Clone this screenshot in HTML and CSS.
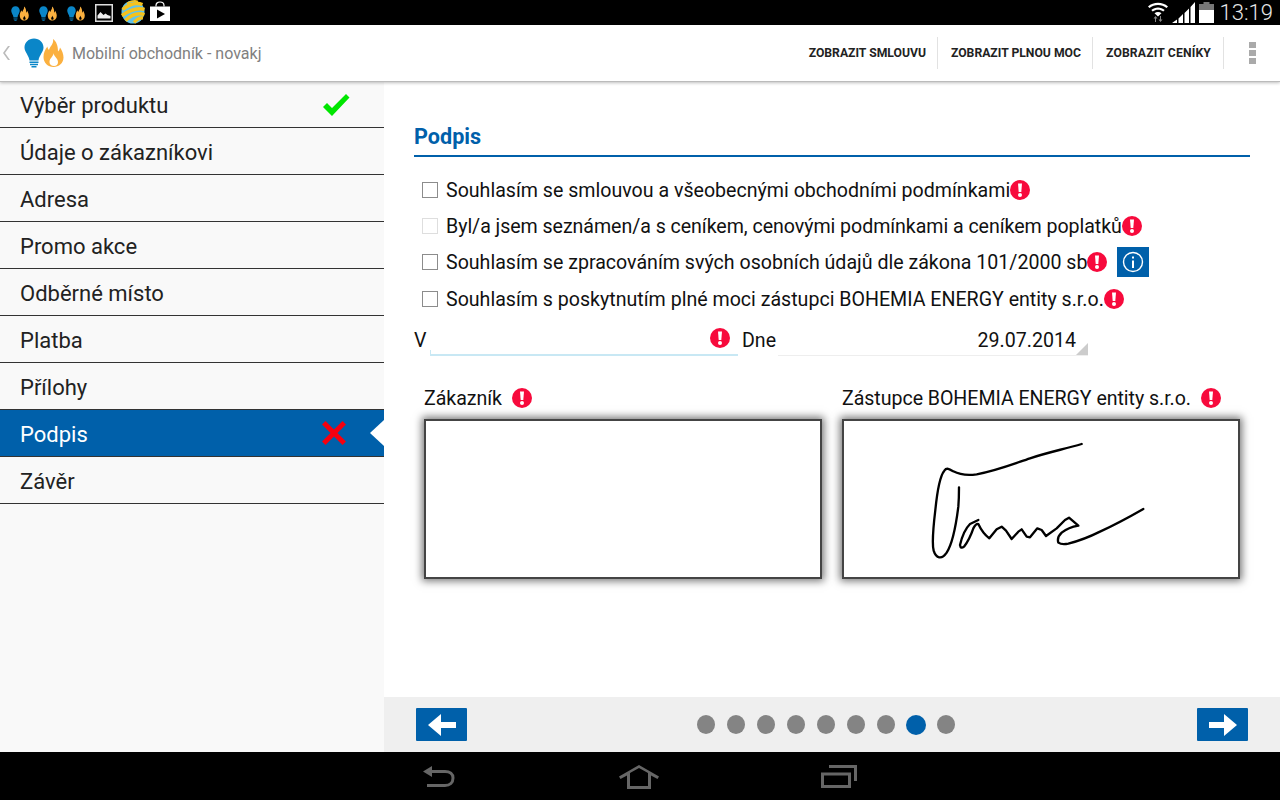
FILE: index.html
```html
<!DOCTYPE html>
<html lang="cs">
<head>
<meta charset="utf-8">
<title>Mobilní obchodník</title>
<link rel="stylesheet" href="styles.css">
</head>
<body>
<svg class="defs" width="0" height="0" aria-hidden="true">
  <symbol id="logo" viewBox="0 0 40 30" preserveAspectRatio="none">
    <path d="M10 .5C4.500.5.5 4.500.5 9.500c0 4.500 4.500 8 5 13h9c.5-5 5-8.500 5-13C19.500 4.500 15.500.5 10 .5z" fill="#0a86c8"/>
    <path d="M5.500 23.500h9V25h-9zM6 25.800h8v1.400H6zM7.500 28h5v1.500h-5z" fill="#0a86c8"/>
    <path fill-rule="evenodd" d="M29 1c1 5-3 7-4 11-1-1-1.500-2-1.500-3.500C21 11.500 19.500 15 19.500 19c0 6 4.500 10 10 10s10-4 10-9.500c0-3.500-1.500-7-3.500-10-.3 2-1 3-2 4C34 8 32.500 3.500 29 1zM29.500 15c.5 3-4 5-4 9 0 2.500 2 4 4.500 4s4-1.500 4-4c0-3.500-4-5.500-4.500-9z" fill="#fbb03f"/>
  </symbol>
  <symbol id="logo-small" viewBox="0 0 40 30" preserveAspectRatio="none">
    <path d="M10 .5C4.500.5.5 4.500.5 9.500c0 4.500 4.500 8 5 13h9c.5-5 5-8.500 5-13C19.500 4.500 15.500.5 10 .5z" fill="#0a86c8"/>
    <path d="M5.500 23.500h9V25h-9zM6 25.800h8v1.400H6zM7.500 28h5v1.500h-5z" fill="#0a86c8"/>
    <path fill-rule="evenodd" d="M29 1c1 5-3 7-4 11-1-1-1.500-2-1.500-3.500C21 11.500 19.500 15 19.500 19c0 6 4.500 10 10 10s10-4 10-9.500c0-3.500-1.500-7-3.500-10-.3 2-1 3-2 4C34 8 32.500 3.500 29 1zM29.500 19c.3 2-2.500 3.500-2.500 6 0 1.500 1.200 2.500 2.800 2.500s2.700-1 2.700-2.500c0-2.500-2.700-4-3-6z" fill="#fbb03f"/>
  </symbol>
  <symbol id="alert" viewBox="0 0 20 20">
    <circle cx="10" cy="10" r="10" fill="#f70a3c"/>
    <path d="M8 3.500h4l-.7 8.500H8.700z" fill="#fff"/>
    <circle cx="10" cy="15" r="2" fill="#fff"/>
  </symbol>
</svg>

<header class="status">
  <div class="status-left">
    <svg class="st-logo"><use href="#logo-small"/></svg>
    <svg class="st-logo"><use href="#logo-small"/></svg>
    <svg class="st-logo"><use href="#logo-small"/></svg>
    <svg class="st-image" viewBox="0 0 18 18">
      <rect x=".75" y=".75" width="16.500" height="16.500" fill="#000" stroke="#ddd" stroke-width="1.500"/>
      <path d="M2.500 14.500v-3l3-3.500 3 3 2-1.500 2 1.500 3 1v2.500z" fill="#eee"/>
    </svg>
    <svg class="st-globe" viewBox="0 0 24 24">
      <circle cx="12" cy="12" r="11.500" fill="#63c3e8"/>
      <path d="M1.500 9.500C8 4.500 15 2 21.500 4.500M.8 15.500C8 10.500 16 7 23.500 9.500M4.500 20.500C10 15 17 12.500 23.500 14.500M13 22.500c3-3.500 6-5 9-4.500" fill="none" stroke="#f6c21c" stroke-width="3.400"/>
      <path d="M6 3.500C10 1 14 .5 17 1.500" fill="none" stroke="#f6c21c" stroke-width="1.800"/>
    </svg>
    <svg class="st-bag" viewBox="0 0 20 20">
      <path d="M6 5.500V4.500C6 2.500 7.500 1 10 1s4 1.500 4 3.500v1" fill="none" stroke="#fff" stroke-width="1.200"/>
      <path d="M0 5.500h20V20H0z" fill="#fff"/>
      <path d="M7 8.500l8 4.500-8 4.500z" fill="#000"/>
    </svg>
  </div>
  <div class="status-right">
    <svg class="st-wifi" viewBox="0 0 20 21">
      <path d="M0 5.500C5.500.5 14.500.5 20 5.500l-1.500 1.600C13.800 3 6.200 3 1.500 7.100z" fill="#fff"/>
      <path d="M3.300 9C7 5.600 13 5.600 16.700 9l-1.500 1.600c-3-2.600-7.400-2.600-10.400 0z" fill="#fff"/>
      <path d="M6.500 12.300c2-1.700 5-1.700 7 0L10 15.500z" fill="#fff"/>
      <path d="M7 21v-3.500H5.500L7.500 15l2 2.500H8V21zM12 15v3.500h-1.500l2 2.500 2-2.500H13V15z" fill="#888"/>
    </svg>
    <svg class="st-signal" viewBox="0 0 23 21">
      <path d="M0 21l5-3.500V21zM6.500 16.500L11 12v9H6.500zM12.500 11L17 6.500V21h-4.500zM18.500 5L23 0v21h-4.500z" fill="#fff"/>
    </svg>
    <svg class="st-battery" viewBox="0 0 15 21">
      <path d="M4.500 0h6v2h-6z" fill="#777"/>
      <path d="M0 2h15v6H0z" fill="#777"/>
      <path d="M0 8h15v13H0z" fill="#fff"/>
    </svg>
    <span class="clock">13:19</span>
  </div>
</header>

<div class="actionbar">
  <svg class="chevron" viewBox="0 0 8 14"><path d="M7 0L2 7l5 7H5L0 7l5-7z" fill="#bbb"/></svg>
  <svg class="bar-logo"><use href="#logo"/></svg>
  <span class="app-title">Mobilní obchodník - novakj</span>
  <nav class="actions">
    <a class="action">ZOBRAZIT SMLOUVU</a>
    <a class="action">ZOBRAZIT PLNOU MOC</a>
    <a class="action">ZOBRAZIT CENÍKY</a>
  </nav>
  <div class="overflow"><i></i><i></i><i></i></div>
</div>

<div class="body">
  <aside class="sidebar">
    <div class="item">Výběr produktu
      <svg class="mark" viewBox="0 0 28 24"><path d="M1 14l4-4 5 5L24 1l3.500 3.500L10 23z" fill="#00e600"/></svg>
    </div>
    <div class="item">Údaje o zákazníkovi</div>
    <div class="item">Adresa</div>
    <div class="item">Promo akce</div>
    <div class="item">Odběrné místo</div>
    <div class="item">Platba</div>
    <div class="item">Přílohy</div>
    <div class="item active">Podpis
      <svg class="mark cross" viewBox="0 0 24 24"><path d="M3.500 0L12 8.500 20.500 0 24 3.500 15.500 12 24 20.500 20.500 24 12 15.500 3.500 24 0 20.500 8.500 12 0 3.500z" fill="#f5000f"/></svg>
    </div>
    <div class="item">Závěr</div>
  </aside>

  <main class="main">
    <section class="content">
      <h1 class="heading">Podpis</h1>
      <div class="checks">
        <div class="check"><span class="box"></span><span>Souhlasím se smlouvou a všeobecnými obchodními podmínkami</span><svg class="alert"><use href="#alert"/></svg></div>
        <div class="check tight"><span class="box faint"></span><span>Byl/a jsem seznámen/a s ceníkem, cenovými podmínkami a ceníkem poplatků</span><svg class="alert"><use href="#alert"/></svg></div>
        <div class="check"><span class="box"></span><span>Souhlasím se zpracováním svých osobních údajů dle zákona 101/2000 sb</span><svg class="alert"><use href="#alert"/></svg>
          <span class="info"><svg viewBox="0 0 22 22"><circle cx="11" cy="11" r="9.500" fill="none" stroke="#fff" stroke-width="1.400"/><path d="M10 9.500h2V17h-2zM10 5.500h2v2h-2z" fill="#fff"/></svg></span>
        </div>
        <div class="check tall"><span class="box"></span><span>Souhlasím s poskytnutím plné moci zástupci BOHEMIA ENERGY entity s.r.o.</span><svg class="alert"><use href="#alert"/></svg></div>
      </div>

      <div class="fields">
        <span class="label-v">V</span>
        <div class="field place"><svg class="alert"><use href="#alert"/></svg></div>
        <span class="label-d">Dne</span>
        <div class="field date">29.07.2014</div>
      </div>

      <div class="signatures">
        <div class="sig">
          <div class="sig-label">Zákazník<svg class="alert"><use href="#alert"/></svg></div>
          <div class="pad"></div>
        </div>
        <div class="sig">
          <div class="sig-label">Zástupce BOHEMIA ENERGY entity s.r.o.<svg class="alert"><use href="#alert"/></svg></div>
          <div class="pad">
            <svg class="ink" viewBox="42 123 1182 468">
              <path d="M755 192C700 208 650 218 600 235C550 252 500 272 440 283C410 287 385 282 370 274C358 267 350 262 343 272C332 285 322 330 316 390C310 440 305 490 311 512C318 535 335 540 350 518C368 490 380 420 385 380C387 355 387 335 387 322"/>
              <path d="M445 420L420 432Q400 452 390 495Q392 508 402 500Q418 480 430 445Q438 430 445 432Q458 460 478 475L500 448L515 440L528 452L545 477L565 455L575 448L590 470L600 472L622 445L635 450L648 468L680 445L705 420L717 413L745 437Q715 442 695 458Q680 472 685 488Q695 495 715 491C750 482 780 470 810 455C860 432 900 410 940 387"/>
            </svg>
          </div>
        </div>
      </div>
    </section>

    <footer class="pager">
      <button class="arrow"><svg viewBox="0 0 28 22"><path d="M0 11L13 0v8h15v6H13v8z" fill="#fff"/></svg></button>
      <div class="dots">
        <i></i><i></i><i></i><i></i><i></i><i></i><i></i><i class="on"></i><i></i>
      </div>
      <button class="arrow"><svg viewBox="0 0 28 22"><path d="M28 11L15 0v8H0v6h15v8z" fill="#fff"/></svg></button>
    </footer>
  </main>
</div>

<div class="sysbar">
  <svg class="sys-back" viewBox="0 0 32 22">
    <path d="M0 5.500L9 0v11z" fill="#666"/>
    <path d="M8 5.500h14c5 0 8 2.500 8 6.500 0 4.500-3 7.500-8 7.500H4" fill="none" stroke="#666" stroke-width="3"/>
  </svg>
  <svg class="sys-home" viewBox="0 0 40 24">
    <path fill-rule="evenodd" d="M20 0L40 11.500 38.500 14 32 10.500V24H8V10.500L1.500 14 0 11.500zM20 3L11 8v13h18V8z" fill="#666"/>
  </svg>
  <svg class="sys-recent" viewBox="0 0 36 24">
    <path d="M8 0h28v16h-3V3H8z" fill="#666"/>
    <path fill-rule="evenodd" d="M0 7.500h30V23H0zM3 10.500v9.500h24v-9.500z" fill="#666"/>
  </svg>
</div>
</body>
</html>
```

FILE: styles.css
```css
* { box-sizing: border-box; }
html, body { margin: 0; padding: 0; }
body {
  width: 1280px;
  height: 800px;
  overflow: hidden;
  display: flex;
  flex-direction: column;
  background: #fff;
  color: #111;
  font-family: Roboto, "Noto Sans", sans-serif;
}
.defs { position: absolute; }

/* status bar */
.status {
  height: 25px;
  flex: none;
  background: #000;
  display: flex;
  justify-content: space-between;
  align-items: flex-start;
  padding: 0 7px 0 11px;
}
.status-left, .status-right { display: flex; align-items: flex-start; }
.st-logo { width: 18px; height: 15px; margin: 6px 10px 0 0; }
.st-image { width: 18px; height: 18px; margin: 4px 8px 0 0; }
.st-globe { width: 24px; height: 24px; margin: 0 5px 0 0; }
.st-bag { width: 20px; height: 20px; margin: 1px 0 0 0; }
.st-wifi { width: 20px; height: 21px; margin: 1px 4px 0 0; }
.st-signal { width: 23px; height: 21px; margin: 2px 4px 0 0; }
.st-battery { width: 15px; height: 21px; margin: 2px 6px 0 0; }
.clock { color: #e6e6e6; font-size: 22px; font-weight: 300; line-height: 25px; }

/* action bar */
.actionbar {
  height: 57px;
  flex: none;
  display: flex;
  align-items: center;
  background: #fff;
  border-bottom: 1px solid #bbb;
  box-shadow: 0 1px 3px rgba(0,0,0,.25);
  position: relative;
  z-index: 2;
  padding-left: 3px;
}
.chevron { width: 8px; height: 14px; margin-right: 13px; }
.bar-logo { width: 40px; height: 30px; margin-right: 8px; }
.app-title { font-size: 16px; color: #808080; }
.actions { margin-left: auto; display: flex; align-items: center; }
.action {
  height: 32px;
  display: flex;
  align-items: center;
  padding: 0 11px 0 13px;
  font-size: 12.2px;
  font-weight: 700;
  color: #222;
  border-left: 1px solid #e2e2e2;
}
.action:first-child { border-left: 0; }
.action:last-child { border-right: 1px solid #e2e2e2; padding-right: 12px; letter-spacing: .15px; }
.overflow {
  width: 56px;
  display: flex;
  flex-direction: column;
  align-items: center;
  gap: 2px;
}
.overflow i { width: 7px; height: 6px; background: #aaa; display: block; }

/* body */
.body { flex: 1; display: flex; min-height: 0; }
.sidebar { width: 384px; flex: none; background: #f9f9f9; }
.item {
  height: 47px;
  display: flex;
  align-items: center;
  justify-content: space-between;
  padding: 2px 34px 0 20px;
  font-size: 22px;
  color: #222;
  border-bottom: 1px solid #333;
  position: relative;
}
.item:first-child { height: 46px; }
.item.active { background: #0060aa; color: #fff; }
.item.active::after {
  content: "";
  position: absolute;
  right: 0;
  top: 10px;
  border-style: solid;
  border-width: 13px 14px 13px 0;
  border-color: transparent #fff transparent transparent;
}
.mark { width: 28px; height: 24px; margin-top: -2px; }
.mark.cross { width: 24px; height: 24px; margin-right: 4px; }

/* main */
.main { flex: 1; display: flex; flex-direction: column; min-width: 0; }
.content { flex: 1; padding: 42px 30px 0; }
.heading {
  margin: 0;
  height: 33px;
  font-size: 21.6px;
  line-height: 25px;
  font-weight: 700;
  color: #0060aa;
  border-bottom: 2px solid #0060aa;
}
.checks { margin-top: 15px; padding-left: 8px; }
.check {
  height: 36px;
  display: flex;
  align-items: center;
  font-size: 19.6px;
  color: #111;
}
.check.tight { letter-spacing: -.05px; }
.check.tall { height: 37px; padding-top: 1px; }
.box {
  width: 16px;
  height: 16px;
  border: 1px solid #8c8c8c;
  margin-right: 8px;
  flex: none;
}
.box.faint { border-color: #dedede; }
.alert { width: 20px; height: 20px; flex: none; display: block; }
.info {
  width: 32px;
  height: 30px;
  margin-left: 10px;
  background: #0060aa;
  display: flex;
  align-items: center;
  justify-content: center;
}
.info svg { width: 22px; height: 22px; }

.fields { display: flex; margin-top: 5px; font-size: 19.6px; height: 40px; }
.label-v { width: 16px; line-height: 38px; }
.label-d { width: 36px; margin-left: 4px; line-height: 38px; }
.field { height: 34px; display: flex; align-items: center; justify-content: flex-end; position: relative; }
.place {
  width: 308px;
  padding-right: 8px;
  border-bottom: 2px solid #c8e8f4;
}
.place::before {
  content: "";
  position: absolute;
  left: 0;
  bottom: 0;
  width: 1px;
  height: 4px;
  background: #c8e8f4;
}
.date {
  width: 310px;
  padding: 4px 12px 0 0;
  border-bottom: 1px solid #eee;
}
.date::after {
  content: "";
  position: absolute;
  right: 0;
  bottom: 0;
  border-style: solid;
  border-width: 0 0 12px 12px;
  border-color: transparent transparent #ccc transparent;
}

.signatures { display: flex; gap: 20px; margin-top: 22px; padding-left: 10px; }
.sig { width: 398px; }
.sig-label { display: flex; align-items: center; gap: 10px; height: 28px; font-size: 19.6px; letter-spacing: -.05px; }
.pad {
  height: 160px;
  margin-top: 7px;
  background: #fff;
  border: 2px solid #444;
  box-shadow: 0 0 8px 2px rgba(0,0,0,.55);
}
.ink { width: 394px; height: 156px; display: block; }
.ink path { fill: none; stroke: #000; stroke-width: 7; stroke-linecap: round; stroke-linejoin: round; }

/* pager */
.pager {
  height: 55px;
  flex: none;
  background: #efefef;
  display: flex;
  align-items: center;
  justify-content: space-between;
  padding: 0 32px;
}
.arrow {
  width: 51px;
  height: 33px;
  padding: 0;
  border: 0;
  border-radius: 1px;
  background: #0060aa;
  display: flex;
  align-items: center;
  justify-content: center;
}
.arrow svg { width: 28px; height: 22px; }
.dots { display: flex; align-items: center; gap: 12px; margin-right: 12px; }
.dots i { width: 18px; height: 19px; border-radius: 50%; background: #848484; display: block; }
.dots i.on { background: #0060aa; width: 20px; height: 20px; margin: 0 -1px; }

/* system bar */
.sysbar { height: 48px; flex: none; background: #000; display: flex; align-items: flex-start; padding: 13px 0 0 423px; }
.sys-back { width: 32px; height: 22px; margin: 1px 164px 0 0; }
.sys-home { width: 40px; height: 24px; margin-right: 162px; }
.sys-recent { width: 36px; height: 24px; }
```
